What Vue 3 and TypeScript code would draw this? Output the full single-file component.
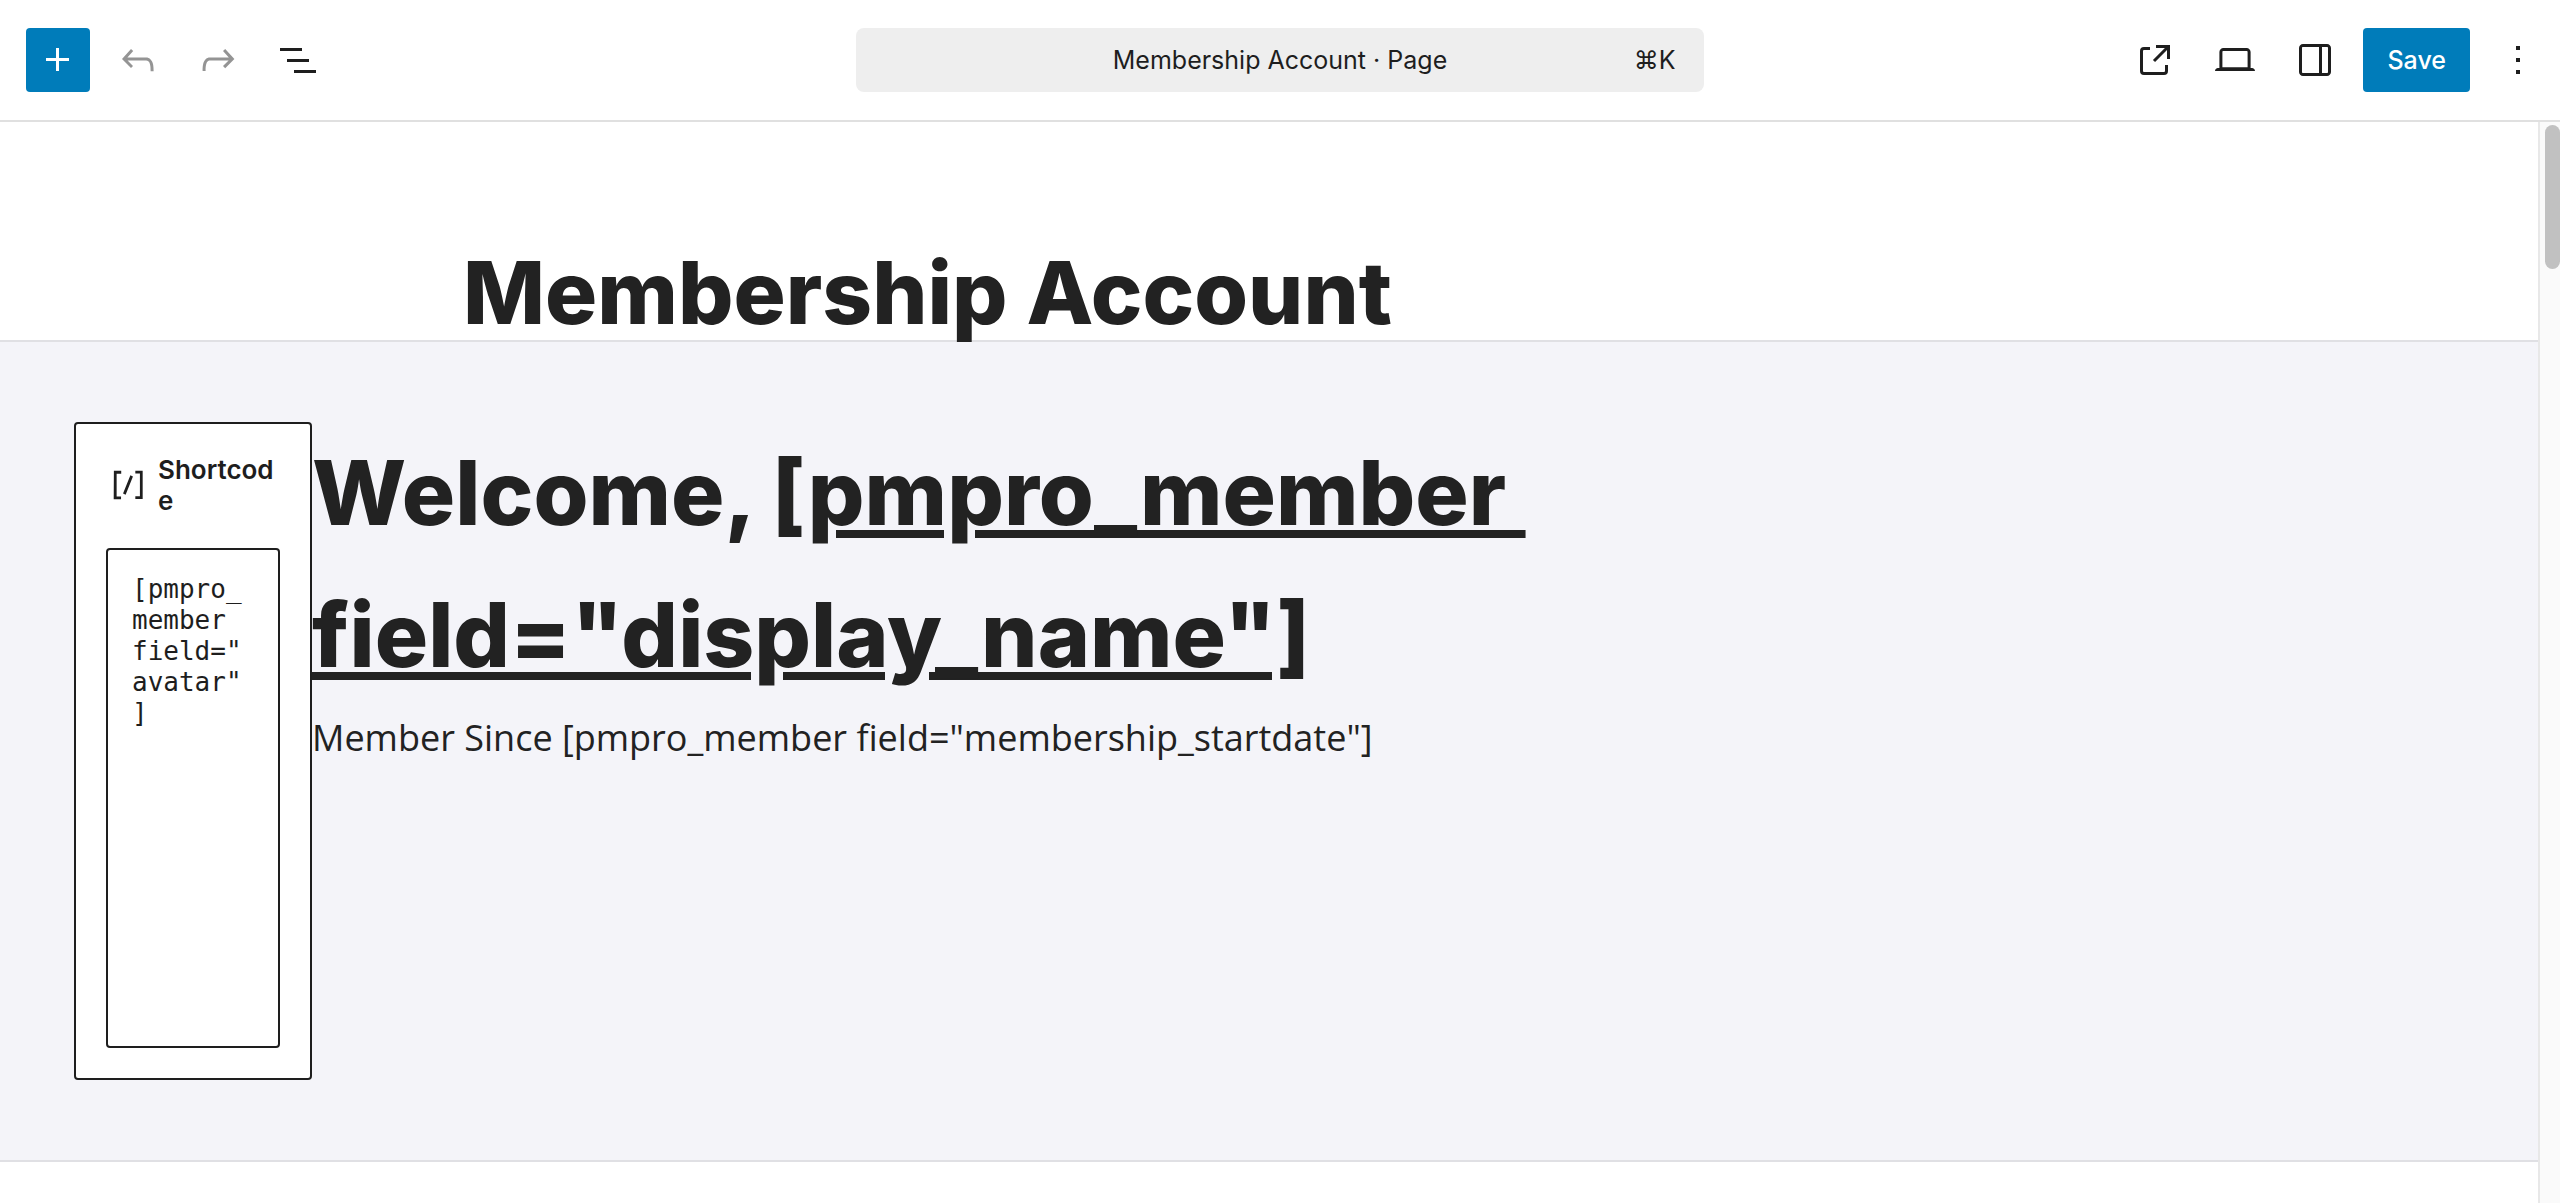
<script setup lang="ts">
import { ref } from 'vue'

interface IconAction {
  label: string
  path: string
  disabled?: boolean
}

const leftActions: IconAction[] = [
  {
    label: 'Undo',
    disabled: true,
    path: 'M18.3 11.7c-.6-.6-1.4-.9-2.3-.9H6.7l2.9-3.3-1.1-1-4.5 5L8.5 16l1-1-2.7-2.7H16c.5 0 .9.2 1.3.5 1 1 1 3.4 1 4.5v.3h1.5v-.2c0-1.5 0-4.3-1.5-5.7z',
  },
  {
    label: 'Redo',
    disabled: true,
    path: 'M15.6 6.5l-1.1 1 2.9 3.3H8c-.9 0-1.7.3-2.3.9-1.4 1.5-1.4 4.2-1.4 5.6v.2h1.5v-.3c0-1.1 0-3.5 1-4.5.3-.3.7-.5 1.3-.5h9.2L14.5 15l1.1 1.1 4.6-4.6-4.6-5z',
  },
  {
    label: 'Document Overview',
    path: 'M3 6h11v1.5H3V6Zm3.5 5.5h11V13h-11v-1.5ZM21 17H10v1.5h11V17Z',
  },
]

const rightActions: IconAction[] = [
  {
    label: 'View Page',
    path: 'M19.5 4.5h-7V6h4.44l-5.97 5.97 1.06 1.06L18 7.06v4.44h1.5v-7Zm-13 1a2 2 0 0 0-2 2v10a2 2 0 0 0 2 2h10a2 2 0 0 0 2-2v-3H17v3a.5.5 0 0 1-.5.5h-10a.5.5 0 0 1-.5-.5v-10a.5.5 0 0 1 .5-.5h3V5.5h-3Z',
  },
  {
    label: 'View',
    path: 'M20.5 16h-.7V8c0-1.1-.9-2-2-2H6.2c-1.1 0-2 .9-2 2v8h-.7c-.8 0-1.5.7-1.5 1.5h20c0-.8-.7-1.5-1.5-1.5zM5.7 8c0-.3.2-.5.5-.5h11.6c.3 0 .5.2.5.5v7.6H5.7V8z',
  },
  {
    label: 'Settings',
    path: 'M18 4H6c-1.1 0-2 .9-2 2v12c0 1.1.9 2 2 2h12c1.1 0 2-.9 2-2V6c0-1.1-.9-2-2-2zm-4 14.5H6c-.3 0-.5-.2-.5-.5V6c0-.3.2-.5.5-.5h8v13zm4.5-.5c0 .3-.2.5-.5.5h-2.5v-13H18c.3 0 .5.2.5.5v12z',
  },
]

const shortcode = ref('[pmpro_member field="avatar"]')
</script>

<template>
  <div class="editor">
    <header class="toolbar">
      <div class="group">
        <button type="button" class="icon-button primary" aria-label="Block Inserter">
          <svg viewBox="0 0 24 24"><path d="M11 12.5V17.5H12.5V12.5H17.5V11H12.5V6H11V11H6V12.5H11Z" /></svg>
        </button>
        <button
          v-for="action in leftActions"
          :key="action.label"
          type="button"
          class="icon-button"
          :disabled="action.disabled"
          :aria-label="action.label"
        >
          <svg viewBox="0 0 24 24"><path :d="action.path" /></svg>
        </button>
      </div>

      <button type="button" class="command-bar">
        <span class="document-name">Membership Account · Page</span>
        <span class="shortcut">⌘K</span>
      </button>

      <div class="group end">
        <button
          v-for="action in rightActions"
          :key="action.label"
          type="button"
          class="icon-button"
          :aria-label="action.label"
        >
          <svg viewBox="0 0 24 24"><path :d="action.path" /></svg>
        </button>
        <button type="button" class="save">Save</button>
        <button type="button" class="icon-button" aria-label="Options">
          <svg viewBox="0 0 24 24"><path d="M13 19h-2v-2h2v2zm0-6h-2v-2h2v2zm0-6h-2V5h2v2z" /></svg>
        </button>
      </div>
    </header>

    <div class="workspace">
      <main class="canvas">
        <h1 class="page-title">Membership Account</h1>
        <section class="member-header">
          <div class="shortcode-block">
            <label for="shortcode-text" class="shortcode-label">
              <svg viewBox="0 0 24 24"><path d="M16 4.2v1.5h2.5v12.5H16v1.5h4V4.2h-4zM4.2 19.8h4v-1.5H5.8V5.8h2.5V4.2h-4l-.1 15.6zm5.1-3.1l1.4.6 4-10-1.4-.6-4 10z" /></svg>
              <span>Shortcode</span>
            </label>
            <textarea id="shortcode-text" v-model="shortcode" spellcheck="false"></textarea>
          </div>
          <div class="welcome">
            <h2>Welcome, <u>[pmpro_member&nbsp;<br />field="display_name"]</u></h2>
            <p>Member Since [pmpro_member field="membership_startdate"]</p>
          </div>
        </section>
      </main>
      <div class="scroll-track"><div class="scroll-thumb"></div></div>
    </div>
  </div>
</template>

<style>
body {
  margin: 0;
  background: #fff;
}
</style>

<style scoped>
.editor {
  display: flex;
  flex-direction: column;
  min-height: 100vh;
  color: #1e1e1e;
  font-family: Inter, sans-serif;
  font-size: 26px;
  line-height: 31px;
}

.toolbar {
  display: grid;
  grid-template-columns: 1fr 33.1% 1fr;
  align-items: center;
  padding: 28px 0;
  border-bottom: 2px solid #e0e0e0;
  font-size: 25px;
}

.group {
  display: flex;
  gap: 16px;
  padding-left: 26px;
}

.group.end {
  justify-content: flex-end;
  padding: 0 10px 0 0;
}

button {
  margin: 0;
  padding: 0;
  border: 0;
  background: none;
  color: inherit;
  font: inherit;
}

.icon-button {
  display: flex;
  align-items: center;
  justify-content: center;
  width: 64px;
  height: 64px;
  border-radius: 4px;
}

.icon-button:disabled {
  color: #949494;
}

svg {
  flex: none;
  width: 48px;
  height: 48px;
  fill: currentColor;
}

.primary,
.save {
  background: #007cba;
  color: #fff;
}

.save {
  height: 64px;
  padding: 0 24px;
  border-radius: 4px;
  font-weight: 500;
}

.command-bar {
  display: grid;
  grid-template-columns: 1fr auto 1fr;
  align-items: center;
  height: 64px;
  padding: 0 28px;
  border-radius: 8px;
  background: #eee;
}

.document-name {
  grid-column: 2;
}

.shortcut {
  text-align: right;
}

.workspace {
  display: flex;
  flex: 1;
}

.canvas {
  flex: 1;
  min-width: 0;
}

.page-title,
h2 {
  margin: 0;
  color: #222;
  font-weight: 800;
  line-height: 142px;
}

.page-title {
  max-width: 1612px;
  height: 118px;
  margin: 0 auto;
  padding-top: 100px;
  font-size: 87px;
}

h2 {
  font-size: 89px;
}

.member-header {
  display: flex;
  align-items: flex-start;
  padding: 80px 74px;
  border: solid #e0e0e4;
  border-width: 2px 0;
  background: #f4f4f9;
}

.shortcode-block {
  display: flex;
  flex-direction: column;
  flex: none;
  gap: 32px;
  box-sizing: border-box;
  width: 238px;
  padding: 30px;
  border: 2px solid #1e1e1e;
  border-radius: 4px;
  background: #fff;
}

.shortcode-label {
  display: flex;
  align-items: center;
  gap: 8px;
  font-weight: 600;
}

.shortcode-label svg {
  width: 44px;
  height: 44px;
}

.shortcode-label span {
  min-width: 0;
  overflow-wrap: anywhere;
}

textarea {
  display: block;
  box-sizing: border-box;
  width: 100%;
  height: 500px;
  margin: 0;
  padding: 24px;
  border: 2px solid #1e1e1e;
  border-radius: 4px;
  background: #fff;
  color: inherit;
  font-family: "DejaVu Sans Mono", monospace;
  font-size: 26px;
  line-height: 31px;
  resize: none;
  overflow: hidden;
}

.welcome {
  flex: 1;
  min-width: 0;
}

u {
  text-decoration-thickness: 8px;
  text-underline-offset: 5px;
}

p {
  margin: 0;
  color: #222;
  font-family: "Open Sans", sans-serif;
  font-size: 36px;
  line-height: 63px;
}

.scroll-track {
  flex: none;
  width: 15px;
  padding: 3px 0 0 5px;
  border-left: 2px solid #e8e8e8;
  background: #fafafa;
}

.scroll-thumb {
  height: 144px;
  border-radius: 8px;
  background: #c1c1c1;
}
</style>
